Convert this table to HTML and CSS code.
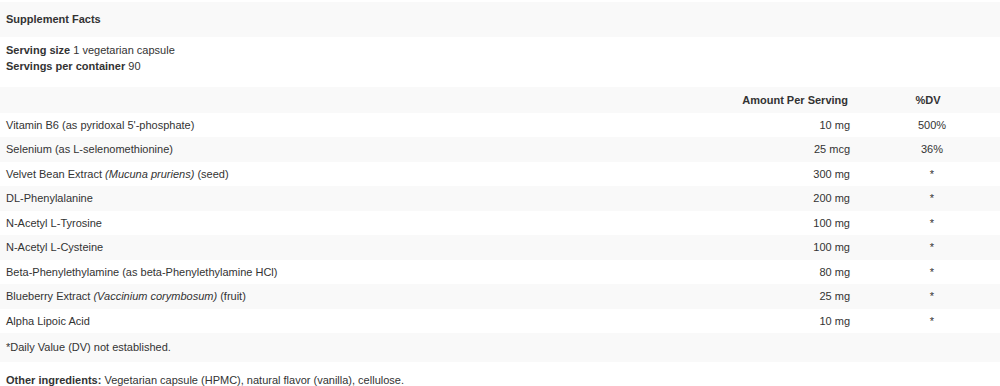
FILE: index.html
```html
<!DOCTYPE html>
<html>
<head>
<meta charset="utf-8">
<link rel="stylesheet" href="styles.css">
</head>
<body>
<div class="facts">
  <div class="title">Supplement Facts</div>
  <div class="serving">
    <div><b>Serving size</b> 1 vegetarian capsule</div>
    <div><b>Servings per container</b> 90</div>
  </div>
  <div class="row head">
    <div class="name"></div>
    <div class="amt">Amount Per Serving</div>
    <div class="dv">%DV</div>
  </div>
  <div class="row">
    <div class="name">Vitamin B6 (as pyridoxal 5'-phosphate)</div>
    <div class="amt">10 mg</div>
    <div class="dv">500%</div>
  </div>
  <div class="row alt">
    <div class="name">Selenium (as L-selenomethionine)</div>
    <div class="amt">25 mcg</div>
    <div class="dv">36%</div>
  </div>
  <div class="row">
    <div class="name">Velvet Bean Extract <i>(Mucuna pruriens)</i> (seed)</div>
    <div class="amt">300 mg</div>
    <div class="dv">*</div>
  </div>
  <div class="row alt">
    <div class="name">DL-Phenylalanine</div>
    <div class="amt">200 mg</div>
    <div class="dv">*</div>
  </div>
  <div class="row">
    <div class="name">N-Acetyl L-Tyrosine</div>
    <div class="amt">100 mg</div>
    <div class="dv">*</div>
  </div>
  <div class="row alt">
    <div class="name">N-Acetyl L-Cysteine</div>
    <div class="amt">100 mg</div>
    <div class="dv">*</div>
  </div>
  <div class="row">
    <div class="name">Beta-Phenylethylamine (as beta-Phenylethylamine HCl)</div>
    <div class="amt">80 mg</div>
    <div class="dv">*</div>
  </div>
  <div class="row alt">
    <div class="name">Blueberry Extract <i>(Vaccinium corymbosum)</i> (fruit)</div>
    <div class="amt">25 mg</div>
    <div class="dv">*</div>
  </div>
  <div class="row">
    <div class="name">Alpha Lipoic Acid</div>
    <div class="amt">10 mg</div>
    <div class="dv">*</div>
  </div>
  <div class="note">*Daily Value (DV) not established.</div>
  <div class="other"><b>Other ingredients:</b> Vegetarian capsule (HPMC), natural flavor (vanilla), cellulose.</div>
</div>
</body>
</html>
```
FILE: styles.css
```css
html, body {
  margin: 0;
  padding: 0;
  background: #fff;
}
body {
  font-family: "Liberation Sans", Arial, sans-serif;
  font-size: 11px;
  color: #333;
}
.facts {
  padding-top: 2px;
}
.title {
  height: 35px;
  line-height: 35px;
  padding-left: 6px;
  background: #f9f9f9;
  font-weight: bold;
}
.serving {
  height: 45px;
  padding: 5px 0 0 6px;
  line-height: 16px;
}
.row {
  display: grid;
  grid-template-columns: 1fr 200px 150px;
  height: 24.45px;
  line-height: 24.45px;
}
.row.alt {
  background: #f9f9f9;
}
.row.head {
  height: 26px;
  line-height: 26px;
  background: #f9f9f9;
  font-weight: bold;
}
.name {
  padding-left: 6px;
  white-space: nowrap;
}
.amt {
  text-align: right;
}
.head .amt {
  padding-right: 2px;
}
.dv {
  text-align: center;
  padding-left: 14px;
}
.head .dv {
  padding-left: 6px;
}
.note {
  height: 29px;
  line-height: 29px;
  padding-left: 6px;
  background: #f9f9f9;
}
.other {
  padding: 10px 0 0 6px;
  line-height: 16px;
}
```
